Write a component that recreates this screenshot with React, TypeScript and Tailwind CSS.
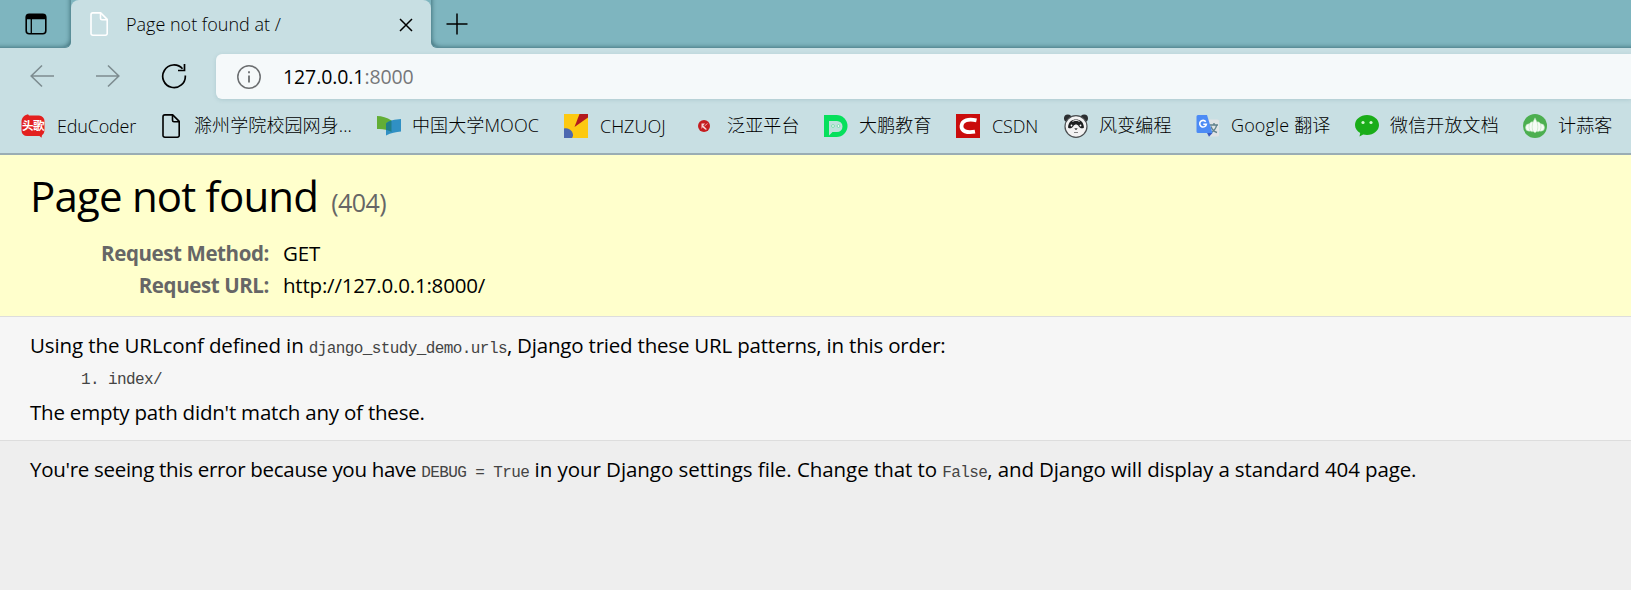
import React from 'react';

const ui = "font-['Open_Sans','Noto_Sans_CJK_SC',sans-serif]";

function PageIcon({ className }: { className: string }) {
  return (
    <svg viewBox="0 0 24 24" className={className} fill="none" stroke="currentColor" strokeWidth="1.6" strokeLinejoin="round">
      <path d="M5.8 .9h7.9l6.5 6.5v14a1.8 1.8 0 0 1-1.8 1.8H5.8A1.8 1.8 0 0 1 4 21.4V2.7A1.8 1.8 0 0 1 5.8 .9z" />
      <path d="M13.500 1v5.200a1.500 1.500 0 0 0 1.500 1.500h5" />
    </svg>
  );
}

const EduIcon = () => (
  <svg viewBox="0 0 24 24" className="size-6">
    <path d="M7 0.300L8 1.600h10a5.500 5.500 0 0 1 5.500 5.500v8.500c0 3-1 4.800-2.500 5.600l-.5 2.500-2-1.600H6A5.500 5.500 0 0 1 .5 16.600V8C.5 4 3 1.200 7 .3z" fill="#e3201f" />
    <text x="12" y="16.300" fontSize="11.500" fontWeight="700" fill="#fff" textAnchor="middle" fontFamily="Noto Sans CJK SC" letterSpacing="-0.500">头歌</text>
  </svg>
);

const MoocIcon = () => (
  <svg viewBox="0 0 24 24" className="size-6">
    <path d="M0 2c5 0 10 1.500 14.500 4.500V18C10 15.500 5 14.500 0 15z" fill="#62ae35" />
    <path d="M9 9.500C12 6.500 18 5.500 24 5v12.500c-5 .3-10 1.500-15 4z" fill="#3090c4" />
    <path d="M9 9.500c1.500-1.500 3.500-2.300 5.500-3V18c-1.500-.9-3.500-1.700-5.500-2.200z" fill="#207f89" />
  </svg>
);

const ChzIcon = () => (
  <svg viewBox="0 0 24 24" className="size-6">
    <path d="M0 0h24v24H0z" fill="#fdc911" />
    <path d="M15.500 0H24v3.500L10.500 13z" fill="#b31a1e" />
    <path d="M0 14.500c5-1.500 9.500 3 9 7.500L8 24H0z" fill="#4c68b0" />
  </svg>
);

const FanyaIcon = () => (
  <svg viewBox="0 0 24 24" className="size-6">
    <circle cx="12" cy="12" r="6" fill="#c51d20" />
    <path d="M9.500 15V9.500h3.500l-1.800 2 3.800 3.800-1.500.5-3-2.500z" fill="#f6d5d5" />
    <path d="M15.500 9.500l-3 2.500" stroke="#f0a5a5" strokeWidth="1" />
  </svg>
);

const DaIcon = () => (
  <svg viewBox="0 0 24 24" className="size-6">
    <path d="M0 1h12.500a11 11 0 0 1 0 22H0z" fill="#06e05c" />
    <path d="M5 7h8a5.300 5.300 0 0 1 0 11H8.500L5 21.500z" fill="#bfe0dc" />
    <circle cx="9" cy="12" r="1.400" fill="#fff" stroke="#4fd490" strokeWidth=".7" />
    <circle cx="14.500" cy="12" r="1.400" fill="#fff" stroke="#4fd490" strokeWidth=".7" />
  </svg>
);

const CsdnIcon = () => (
  <svg viewBox="0 0 24 24" className="size-6">
    <path d="M0 0h24v24H0z" fill="#ca0c0c" />
    <path d="M20.500 6.300c-8-1.800-14.500-.3-15 5.700-.4 5.500 5.500 7 13.500 5.700" fill="none" stroke="#fff" strokeWidth="3.800" />
  </svg>
);

const PandaIcon = () => (
  <svg viewBox="0 0 24 24" className="size-6">
    <circle cx="3.800" cy="4.300" r="3.800" fill="#2c2f31" />
    <circle cx="20.200" cy="4.300" r="3.800" fill="#2c2f31" />
    <ellipse cx="12" cy="12.500" rx="11" ry="10.800" fill="#f2f2f2" stroke="#4a4e50" strokeWidth="1.200" />
    <path d="M4 13.500C4.500 7.500 8 5.500 12 5.500s7.500 2 8 8c-1.500 1.500-4 1-5.500-1.500-1-2-4-2-5 0C8 14.500 5.500 15 4 13.500z" fill="#1d1f20" />
    <path d="M8.500 7.500c2-1.500 5-1.500 7 0" fill="none" stroke="#eee" strokeWidth="1" />
    <circle cx="7.500" cy="11.500" r=".9" fill="#fff" />
    <circle cx="16.500" cy="11.500" r=".9" fill="#fff" />
    <path d="M10.800 14.500h2.400L12 16zM10 18.500h4" fill="#333" stroke="#555" strokeWidth=".7" />
  </svg>
);

const TranslateIcon = () => (
  <svg viewBox="0 0 24 24" className="size-6">
    <path d="M9 5.500h12.500a1.500 1.500 0 0 1 1.500 1.500v14a1.500 1.500 0 0 1-1.500 1.500H13z" fill="#e0e3e5" />
    <path d="M13.500 11h8.500M18 9v2M20.500 11.500c-.5 3-3 5.500-5.500 7.500M15 12.500c1 3 3 5 6 6" fill="none" stroke="#60808a" strokeWidth="1.400" />
    <path d="M2 1h9l5.500 18H2a1.500 1.500 0 0 1-1.500-1.500v-15A1.500 1.500 0 0 1 2 1z" fill="#4c8bf5" />
    <path d="M11 19h5.500L13 22.800z" fill="#3a5bc0" />
    <path d="M9.700 7.700A3.300 3.300 0 1 0 10.300 10.300H7.300" fill="none" stroke="#fff" strokeWidth="1.600" />
  </svg>
);

const WechatIcon = () => (
  <svg viewBox="0 0 24 24" className="size-6">
    <path d="M12 1c6.600 0 12 4.400 12 10s-5.400 10-12 10c-1.300 0-2.600-.2-3.800-.5L4.500 22.500l.7-3.500C2 17.200 0 14.300 0 11 0 5.400 5.400 1 12 1z" fill="#1aad19" />
    <circle cx="8" cy="8.500" r="1.600" fill="#d3f5d0" />
    <circle cx="16" cy="8.500" r="1.600" fill="#d3f5d0" />
  </svg>
);

const JisuankeIcon = () => (
  <svg viewBox="0 0 24 24" className="size-6">
    <circle cx="12" cy="12" r="12" fill="#4caf50" />
    <g fill="#f6fbf6" stroke="#a9daab" strokeWidth=".5">
      <ellipse cx="6.300" cy="13.500" rx="3.800" ry="3.800" />
      <ellipse cx="17.700" cy="13.500" rx="3.800" ry="3.800" />
      <ellipse cx="9" cy="12.800" rx="3" ry="5" />
      <ellipse cx="15" cy="12.800" rx="3" ry="5" />
      <path d="M12 3.800c.8 2.200 2.800 4.500 2.800 8.700 0 3.500-1 6-2.800 6s-2.800-2.500-2.800-6c0-4.200 2-6.500 2.800-8.700z" />
    </g>
  </svg>
);

const bookmarks = [
  { icon: <EduIcon />, label: 'EduCoder', size: 'w-[138px]', text: 'pb-px tracking-[-0.2px]' },
  { icon: <PageIcon className="size-6" />, label: '滁州学院校园网身...', size: 'w-[218px]', text: 'pb-[2px] -ml-px tracking-[0.1px]' },
  { icon: <MoocIcon />, label: '中国大学MOOC', size: 'w-[187px]', text: 'pb-[2px] -ml-px tracking-[0.1px]' },
  { icon: <ChzIcon />, label: 'CHZUOJ', size: 'w-[128px]', text: 'pb-px' },
  { icon: <FanyaIcon />, label: '泛亚平台', size: 'w-[132px]', text: 'pb-[2px] -ml-px tracking-[0.15px]' },
  { icon: <DaIcon />, label: '大鹏教育', size: 'w-[132px]', text: 'pb-[2px] -ml-px tracking-[0.15px]' },
  { icon: <CsdnIcon />, label: 'CSDN', size: 'w-[108px]', text: 'pb-px tracking-[-0.15px]' },
  { icon: <PandaIcon />, label: '风变编程', size: 'w-[132px]', text: 'pb-[2px] -ml-px tracking-[0.15px]' },
  { icon: <TranslateIcon />, label: 'Google 翻译', size: 'w-[159px]', text: 'pb-[2px] -ml-px tracking-[0.15px]' },
  { icon: <WechatIcon />, label: '微信开放文档', size: 'w-[168px]', text: 'pb-[2px] -ml-px tracking-[0.15px]' },
  { icon: <JisuankeIcon />, label: '计蒜客', size: 'w-[108px]', text: 'pb-[2px] -ml-px tracking-[0.15px]' },
];

function TabStrip() {
  return (
    <div className="flex h-12 overflow-hidden bg-[#c8dfe3]">
      <div className="flex w-[71px] items-center rounded-br-md border-b border-[#5b8e99] bg-[#7eb5bf] pl-[25px] shadow-[inset_-4px_-3px_4px_-3px_rgba(30,75,85,0.6)]">
        <svg viewBox="0 0 22 22" className="size-[22px]" fill="none" stroke="#000" strokeWidth="1.600">
          <rect x="1.200" y="1.200" width="19.600" height="19.600" rx="3" />
          <path d="M1 4a3 3 0 0 1 3-3h14a3 3 0 0 1 3 3v2.200H1z" fill="#000" stroke="none" />
          <path d="M6.300 6v15" strokeWidth="1.300" />
        </svg>
      </div>
      <div className="w-[360px] bg-[#7eb5bf]">
        <div className="flex h-12 items-center rounded-t-lg bg-[#c8dfe3] pl-4">
          <PageIcon className="size-6 text-white" />
          <span className="ml-[15px] w-[273px] pb-px text-[18px] font-light leading-6">Page not found at /</span>
          <svg viewBox="0 0 14 14" className="mt-[2px] size-[14px]" stroke="#000" strokeWidth="1.500">
            <path d="M1 1l12 12M13 1L1 13" />
          </svg>
        </div>
      </div>
      <div className="flex flex-1 items-center rounded-bl-md border-b border-[#5b8e99] bg-[#7eb5bf] pl-[15px] shadow-[inset_4px_-3px_4px_-3px_rgba(30,75,85,0.6)]">
        <svg viewBox="0 0 22 22" className="size-[22px]" stroke="#000" strokeWidth="1.500">
          <path d="M11 .5v21M.5 11h21" />
        </svg>
      </div>
    </div>
  );
}

function Toolbar() {
  return (
    <div className="flex h-[57px] items-center">
      <svg viewBox="0 0 24 24" className="mb-[2px] ml-[30px] size-6" fill="none" stroke="#7d8c90" strokeWidth="1.600">
        <path d="M12 1.500L1.200 12 12 22.500M1.200 12H24" />
      </svg>
      <svg viewBox="0 0 24 24" className="mb-[2px] ml-[42px] size-6" fill="none" stroke="#7d8c90" strokeWidth="1.600">
        <path d="M12 1.500L22.800 12 12 22.500M22.800 12H0" />
      </svg>
      <svg viewBox="0 0 26 26" className="mb-px ml-[41px] size-[26px]" fill="none" stroke="#000" strokeWidth="1.700">
        <path d="M24.300 12.500A11.300 11.300 0 1 1 21.500 5.800" />
        <path d="M23.500 1v6.500h-6.500" />
      </svg>
      <div className="ml-[29px] flex h-[45px] flex-1 items-center rounded-l-md bg-[#f5f9fa] pl-[21px] shadow-[0_1px_4px_rgba(60,110,120,0.18)]">
        <svg viewBox="0 0 24 24" className="size-6" fill="none" stroke="#6b6e70" strokeWidth="1.500">
          <circle cx="12" cy="12" r="11.200" />
          <path d="M12 10.500v7M12 6.200v2" strokeWidth="1.800" />
        </svg>
        <span className="ml-[22px] text-[19.500px] leading-7 tracking-[-0.1px]">
          127.0.0.1<span className="text-[#757779]">:8000</span>
        </span>
      </div>
    </div>
  );
}

function BookmarksBar() {
  return (
    <div className="flex h-[50px] border-b-2 border-[#9aadb4] pl-[21px] pt-[9px]">
      {bookmarks.map((b) => (
        <div key={b.label} className={`flex h-6 shrink-0 items-center gap-3 ${b.size}`}>
          {b.icon}
          <span className={`whitespace-nowrap text-[18px] font-light leading-6 ${b.text}`}>{b.label}</span>
        </div>
      ))}
    </div>
  );
}

function Code({ children }: { children: React.ReactNode }) {
  return (
    <code className="whitespace-pre font-['Liberation_Mono',monospace] text-[16px] leading-none tracking-[-0.6px] text-[#444]">{children}</code>
  );
}

export default function App() {
  return (
    <div className={`flex h-[590px] w-full flex-col overflow-hidden bg-[#eee] text-black ${ui}`}>
      <header className="bg-[#c8dfe3]">
        <TabStrip />
        <Toolbar />
        <BookmarksBar />
      </header>
      <section className="h-[162px] border-b border-[#ddd] bg-[#ffc] pl-[30px] pt-[13px]">
        <h1 className="text-[42px] font-normal leading-[56px] tracking-[-0.8px]">
          Page not found <span className="ml-[3px] text-[25px] leading-none tracking-[-0.6px] text-[#666]">(404)</span>
        </h1>
        <dl className="mt-[13px] grid grid-cols-[239px_1fr] gap-x-[14px] text-[20.500px] leading-8 tracking-[-0.2px]">
          <dt className="text-right font-bold tracking-[-0.4px] text-[#666]">Request Method:</dt>
          <dd>GET</dd>
          <dt className="text-right font-bold tracking-[-0.4px] text-[#666]">Request URL:</dt>
          <dd>http://127.0.0.1:8000/</dd>
        </dl>
      </section>
      <section className="h-[124px] border-b border-[#ddd] bg-[#f6f6f6] pl-[30px] pt-3 text-[20.500px] leading-8">
        <p className="whitespace-nowrap">
          <span className="tracking-[-0.11px]">Using the URLconf defined in </span>
          <Code>django_study_demo.urls</Code>
          <span className="tracking-[-0.2px]">, Django tried these URL patterns, in this order:</span>
        </p>
        <ol className="flex gap-[9px] pl-[51px] pt-[3px] font-['Liberation_Mono',monospace] text-[16px] tracking-[-0.6px] text-[#444]">
          <li className="list-none">1.</li>
          <li className="list-none">index/</li>
        </ol>
        <p className="tracking-[-0.21px]">The empty path didn't match any of these.</p>
      </section>
      <section className="whitespace-nowrap pl-[30px] pt-3 text-[20.500px] leading-8">
        <p>
          <span className="tracking-[-0.29px]">You're seeing this error because you have </span>
          <Code>DEBUG = True</Code>
          <span className="tracking-[-0.06px]"> in your Django settings file. Change that to </span>
          <Code>False</Code>
          <span className="tracking-[-0.12px]">, and Django will display a standard 404 page.</span>
        </p>
      </section>
    </div>
  );
}
